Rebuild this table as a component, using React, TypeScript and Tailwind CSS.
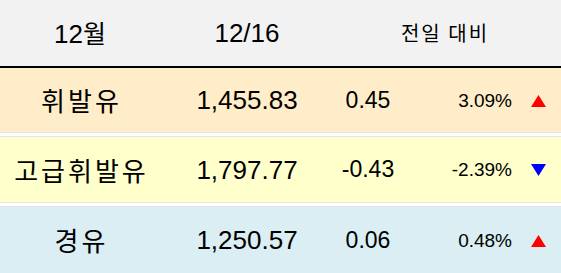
import React from "react";

type Row = {
  name: string;
  price: string;
  diff: string;
  rate: string;
  up: boolean;
  bg: string;
};

const rows: Row[] = [
  { name: "휘발유", price: "1,455.83", diff: "0.45", rate: "3.09%", up: true, bg: "bg-[#feedc8] h-[64px]" },
  { name: "고급휘발유", price: "1,797.77", diff: "-0.43", rate: "-2.39%", up: false, bg: "bg-[#ffffcc] h-[65px]" },
  { name: "경유", price: "1,250.57", diff: "0.06", rate: "0.48%", up: true, bg: "bg-[#daeef3] h-[66px]" },
];

const cols = "grid grid-cols-[160px_174px_68px_112px_47px] items-center";
const kr = "font-['Noto_Sans_CJK_KR','Liberation_Sans',sans-serif]";
const en = "font-['Liberation_Sans',Arial,sans-serif]";

function Arrow({ up }: { up: boolean }) {
  return (
    <svg width="15" height="12" viewBox="0 0 15 12" className="block">
      {up ? (
        <polygon points="7.5,0 15,12 0,12" fill="#ff0000" />
      ) : (
        <polygon points="0,0 15,0 7.5,12" fill="#0000ff" />
      )}
    </svg>
  );
}

export default function App() {
  return (
    <div className="w-[561px] h-[273px] bg-white text-black overflow-hidden">
      {/* header */}
      <div className={`${cols} h-[68px] bg-[#f2f2f2] border-b-2 border-black`}>
        <div className={`text-center text-[26px] leading-none ${en}`}>
          12<span className={`text-[25px] ${kr}`}>월</span>
        </div>
        <div className={`text-center text-[26px] leading-none ${en}`}>12/16</div>
        <div className={`col-span-3 text-center text-[20px] leading-none tracking-[2px] pr-[5px] ${kr}`}>
          전일 대비
        </div>
      </div>

      {rows.map((r, i) => (
        <React.Fragment key={r.name}>
          {i > 0 && <div className="h-[5px] bg-white border-y border-[#e4e4e4]" />}
          <div className={`${cols} ${r.bg}`}>
            <div className={`text-center text-[26px] leading-none tracking-[3px] pl-[3px] ${kr}`}>
              {r.name}
            </div>
            <div className={`text-center text-[26px] leading-none ${en}`}>{r.price}</div>
            <div className={`text-center text-[23px] leading-none ${en}`}>{r.diff}</div>
            <div className={`text-right text-[19px] leading-none pr-[2px] ${en}`}>{r.rate}</div>
            <div className="pl-[17px] pt-[1px]">
              <Arrow up={r.up} />
            </div>
          </div>
        </React.Fragment>
      ))}
    </div>
  );
}
